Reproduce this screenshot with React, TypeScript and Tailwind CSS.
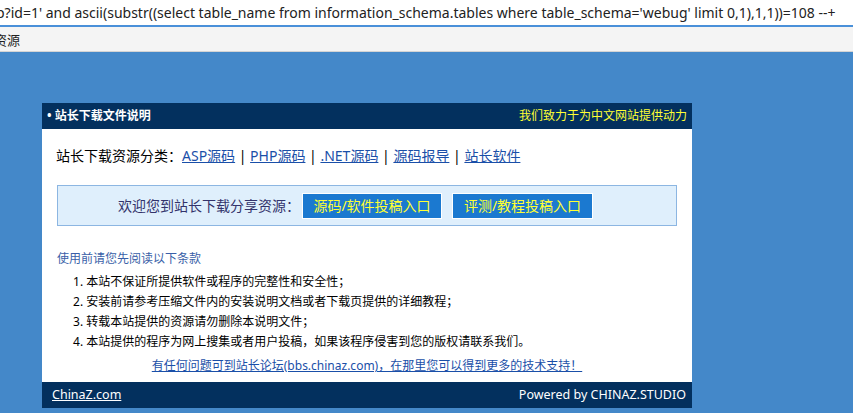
// Download notice page from a mirrored webug SQLi lab, as seen in a browser.

const FONT = { fontFamily: '"Noto Sans", "Noto Sans CJK SC", sans-serif' };

const categories = ["ASP源码", "PHP源码", ".NET源码", "源码报导", "站长软件"];

const terms = [
  "本站不保证所提供软件或程序的完整性和安全性；",
  "安装前请参考压缩文件内的安装说明文档或者下载页提供的详细教程；",
  "转载本站提供的资源请勿删除本说明文件；",
  "本站提供的程序为网上搜集或者用户投稿，如果该程序侵害到您的版权请联系我们。",
];

export default function App() {
  return (
    <div className="flex h-[413px] w-[853px] flex-col overflow-hidden bg-[#4488c9]" style={FONT}>
      {/* browser chrome */}
      <div className="h-[25px] overflow-hidden whitespace-nowrap bg-white text-[14px] leading-[25px] text-[#222]">
        <span className="-ml-[4px]">
          p?id=1' and ascii(substr((select table_name from information_schema.tables where table_schema='webug' limit 0,1),1,1))=108 --+
        </span>
      </div>
      <div className="h-[2px] bg-[#4a90d9]" />
      <div className="h-[25px] overflow-hidden whitespace-nowrap border-b border-[#d4d4d4] bg-[#f4f4f4] text-[13px] leading-[27px] text-[#222]">
        <span className="-ml-[6px]">资源</span>
      </div>

      {/* notice card */}
      <div className="ml-[42px] mt-[51px] flex w-[650px] flex-col">
        <div className="flex h-[26px] items-center justify-between bg-[#03305e] px-[5px] text-[12px]">
          <span className="font-bold text-white">• 站长下载文件说明</span>
          <span className="text-[#ffff33]">我们致力于为中文网站提供动力</span>
        </div>

        <div className="flex h-[253px] flex-col bg-white">
          <div className="ml-[14px] mt-[17px] h-[20px] text-[14px] leading-[20px] text-black">
            站长下载资源分类：
            {categories.map((c, i) => (
              <span key={c}>
                {i > 0 && " | "}
                <a className="text-[#1a4fa8] underline">{c}</a>
              </span>
            ))}
          </div>

          <div className="mx-[15px] mt-[19px] flex h-[41px] items-center border border-[#8cb6e2] bg-[#dfeffc] pl-[60px] text-[14px]">
            <span className="text-[#33336b]">欢迎您到站长下载分享资源：</span>
            <span className="ml-[2px] flex h-[26px] w-[140px] items-center justify-center border border-white bg-[#1b79d0] text-[#ffff33]">
              源码/软件投稿入口
            </span>
            <span className="ml-[10px] flex h-[26px] w-[141px] items-center justify-center border border-white bg-[#1b79d0] text-[#ffff33]">
              评测/教程投稿入口
            </span>
          </div>

          <div className="ml-[15px] mt-[23px] h-[20px] text-[12px] leading-[20px] text-[#3a5fa8]">
            使用前请您先阅读以下条款
          </div>
          <ol className="ml-[31px] mt-[3px] text-[12px] leading-[20px] text-black">
            {terms.map((t, i) => (
              <li key={i}>
                {i + 1}. {t}
              </li>
            ))}
          </ol>
          <div className="mt-[4px] text-center text-[12px] leading-[20px]">
            <a className="text-[#1a4fa8] underline">
              有任何问题可到站长论坛(bbs.chinaz.com)，在那里您可以得到更多的技术支持！
            </a>
          </div>
        </div>

        <div className="flex h-[26px] items-center justify-between bg-[#03305e] pl-[10px] pr-[6px] text-[12.5px] text-white">
          <a className="underline">ChinaZ.com</a>
          <span>Powered by CHINAZ.STUDIO</span>
        </div>
      </div>
    </div>
  );
}
